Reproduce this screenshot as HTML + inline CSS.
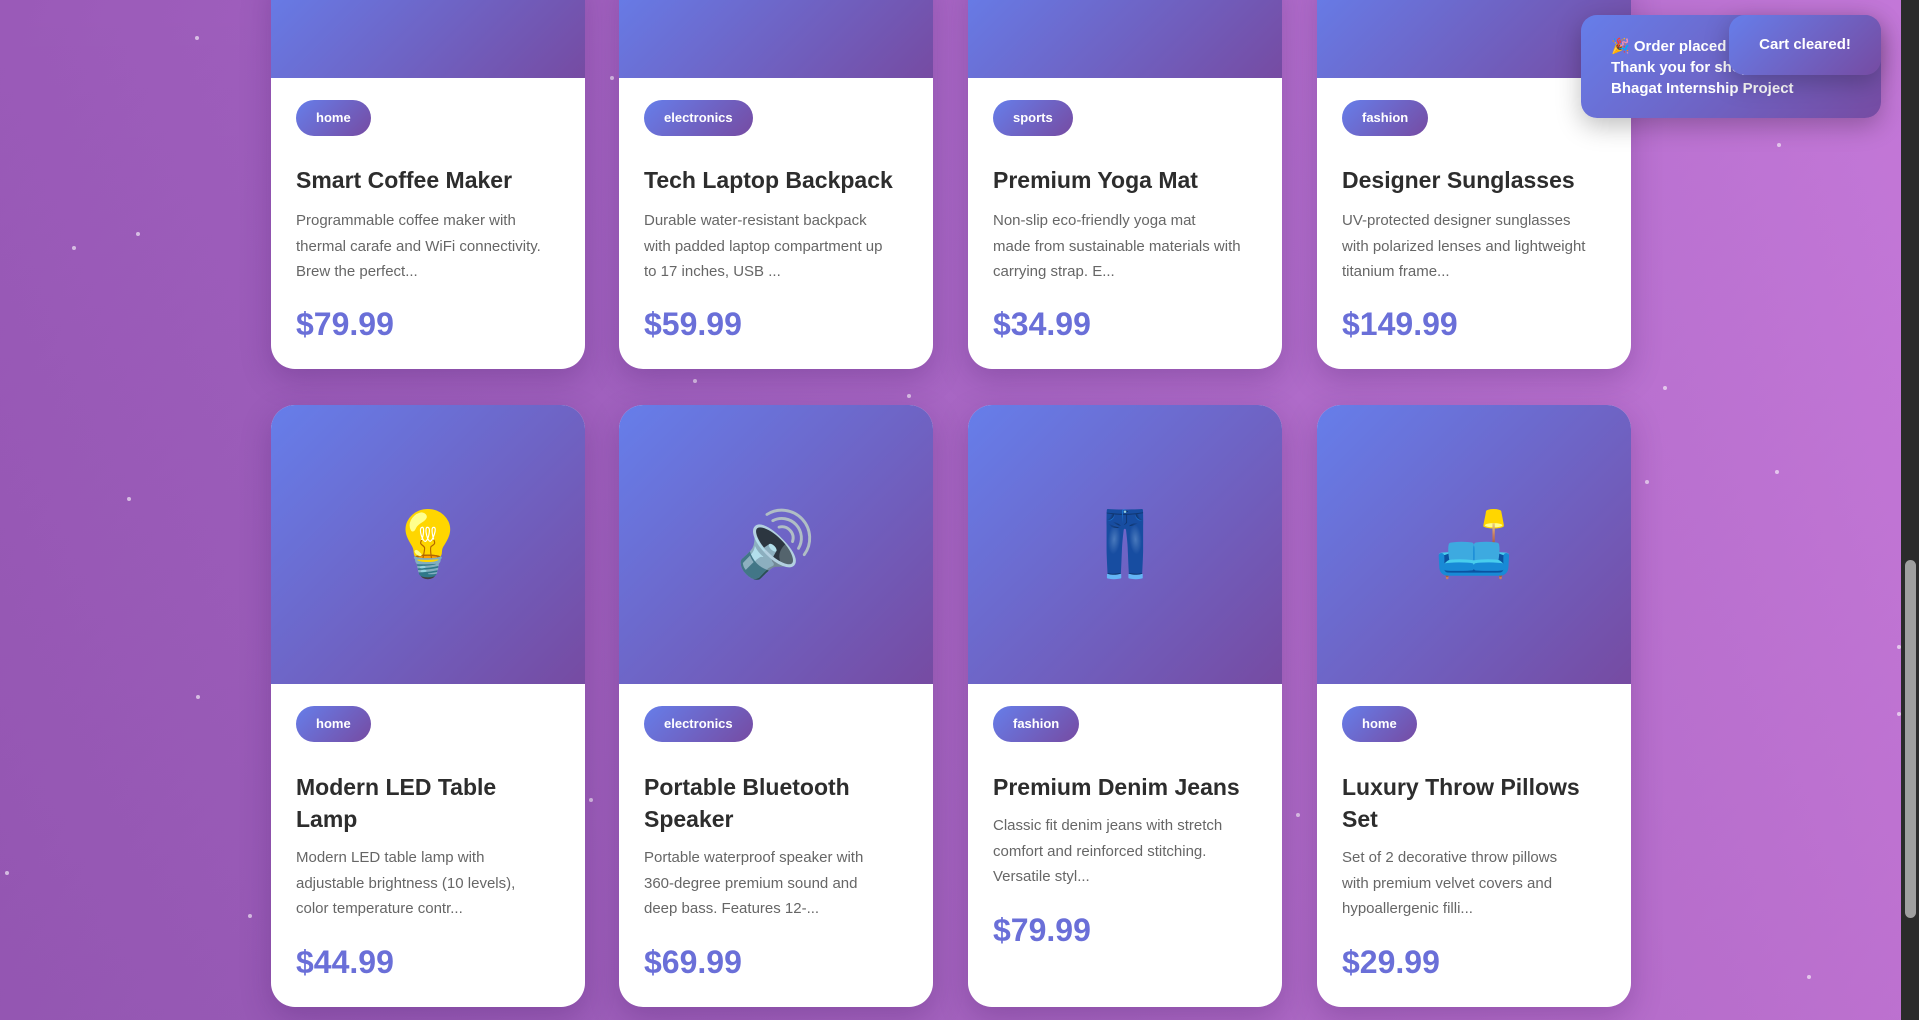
<!DOCTYPE html>
<html><head><meta charset="utf-8"><style>
*{margin:0;padding:0;box-sizing:border-box}
html,body{width:1919px;height:1020px;overflow:hidden}
body{position:relative;font-family:"Liberation Sans","DejaVu Sans",sans-serif;
background:linear-gradient(110deg,#9a5ab8 0%,#a665c4 35%,#b670cf 65%,#cf7ee0 100%);}
.bg2{position:absolute;inset:0;background:linear-gradient(180deg,rgba(0,0,0,0) 0%,rgba(60,20,90,0.12) 100%)}
.card{position:absolute;width:314px;background:#fff;border-radius:24px;overflow:hidden;box-shadow:0 10px 30px rgba(60,20,90,0.25)}
.img{position:absolute;left:0;top:0;width:100%;background:linear-gradient(135deg,#667eea 0%,#764ba2 100%);display:flex;align-items:center;justify-content:center;font-size:64px;font-family:"Noto Color Emoji","DejaVu Sans",sans-serif}
.tag{position:absolute;left:25px;height:36px;padding:0 20px;border-radius:18px;background:linear-gradient(135deg,#667eea,#764ba2);color:#fff;font-weight:bold;font-size:13px;line-height:36px}
.t{position:absolute;left:25px;right:20px;font-weight:bold;font-size:23px;line-height:32px;color:#2d2d2d}
.d{position:absolute;left:25px;font-size:15px;line-height:25.5px;color:#666;white-space:nowrap}
.p{position:absolute;left:25px;font-weight:bold;font-size:32px;color:#6a6fd8;line-height:40px}
.dot{position:absolute;width:4px;height:4px;border-radius:50%;background:rgba(255,255,255,0.6)}
.toast{position:absolute;border-radius:16px;background:linear-gradient(135deg,#667eea,#764ba2);color:#fff;font-weight:bold;font-size:15px;box-shadow:0 8px 25px rgba(0,0,0,0.25)}
.sb{position:absolute;left:1901px;top:0;width:18px;height:1020px;background:#2b2b2b}
.th{position:absolute;left:1905px;top:560px;width:11px;height:358px;border-radius:6px;background:#9f9f9f}
</style></head><body>
<div class="bg2"></div>
<div class="dot" style="left:195px;top:36px"></div>
<div class="dot" style="left:136px;top:232px"></div>
<div class="dot" style="left:72px;top:246px"></div>
<div class="dot" style="left:127px;top:497px"></div>
<div class="dot" style="left:196px;top:695px"></div>
<div class="dot" style="left:5px;top:871px"></div>
<div class="dot" style="left:248px;top:914px"></div>
<div class="dot" style="left:610px;top:76px"></div>
<div class="dot" style="left:693px;top:379px"></div>
<div class="dot" style="left:907px;top:394px"></div>
<div class="dot" style="left:589px;top:798px"></div>
<div class="dot" style="left:1296px;top:813px"></div>
<div class="dot" style="left:1663px;top:386px"></div>
<div class="dot" style="left:1775px;top:470px"></div>
<div class="dot" style="left:1645px;top:480px"></div>
<div class="dot" style="left:1777px;top:143px"></div>
<div class="dot" style="left:1807px;top:975px"></div>
<div class="dot" style="left:1897px;top:645px"></div>
<div class="dot" style="left:1897px;top:712px"></div>

<div class="card" style="left:271px;top:-30px;height:399px">
<div class="img" style="height:108px"></div>
<div class="tag" style="top:130px">home</div>
<div class="t" style="top:194px">Smart Coffee Maker</div>
<div class="d" style="top:238px">Programmable coffee maker with<br>thermal carafe and WiFi connectivity.<br>Brew the perfect...</div>
<div class="p" style="top:334px">$79.99</div>
</div>
<div class="card" style="left:619px;top:-30px;height:399px">
<div class="img" style="height:108px"></div>
<div class="tag" style="top:130px">electronics</div>
<div class="t" style="top:194px">Tech Laptop Backpack</div>
<div class="d" style="top:238px">Durable water-resistant backpack<br>with padded laptop compartment up<br>to 17 inches, USB ...</div>
<div class="p" style="top:334px">$59.99</div>
</div>
<div class="card" style="left:968px;top:-30px;height:399px">
<div class="img" style="height:108px"></div>
<div class="tag" style="top:130px">sports</div>
<div class="t" style="top:194px">Premium Yoga Mat</div>
<div class="d" style="top:238px">Non-slip eco-friendly yoga mat<br>made from sustainable materials with<br>carrying strap. E...</div>
<div class="p" style="top:334px">$34.99</div>
</div>
<div class="card" style="left:1317px;top:-30px;height:399px">
<div class="img" style="height:108px"></div>
<div class="tag" style="top:130px">fashion</div>
<div class="t" style="top:194px">Designer Sunglasses</div>
<div class="d" style="top:238px">UV-protected designer sunglasses<br>with polarized lenses and lightweight<br>titanium frame...</div>
<div class="p" style="top:334px">$149.99</div>
</div>

<div class="card" style="left:271px;top:405px;height:602px">
<div class="img" style="height:279px">💡</div>
<div class="tag" style="top:301px">home</div>
<div class="t" style="top:366px">Modern LED Table<br>Lamp</div>
<div class="d" style="top:440px">Modern LED table lamp with<br>adjustable brightness (10 levels),<br>color temperature contr...</div>
<div class="p" style="top:537px">$44.99</div>
</div>
<div class="card" style="left:619px;top:405px;height:602px">
<div class="img" style="height:279px">🔊</div>
<div class="tag" style="top:301px">electronics</div>
<div class="t" style="top:366px">Portable Bluetooth<br>Speaker</div>
<div class="d" style="top:440px">Portable waterproof speaker with<br>360-degree premium sound and<br>deep bass. Features 12-...</div>
<div class="p" style="top:537px">$69.99</div>
</div>
<div class="card" style="left:968px;top:405px;height:602px">
<div class="img" style="height:279px">👖</div>
<div class="tag" style="top:301px">fashion</div>
<div class="t" style="top:366px">Premium Denim Jeans</div>
<div class="d" style="top:408px">Classic fit denim jeans with stretch<br>comfort and reinforced stitching.<br>Versatile styl...</div>
<div class="p" style="top:505px">$79.99</div>
</div>
<div class="card" style="left:1317px;top:405px;height:602px">
<div class="img" style="height:279px">🛋️</div>
<div class="tag" style="top:301px">home</div>
<div class="t" style="top:366px">Luxury Throw Pillows<br>Set</div>
<div class="d" style="top:440px">Set of 2 decorative throw pillows<br>with premium velvet covers and<br>hypoallergenic filli...</div>
<div class="p" style="top:537px">$29.99</div>
</div>

<div class="toast" style="left:1581px;top:15px;width:300px;height:103px;padding:21px 0 0 30px;line-height:21px">🎉 Order placed successfully!<br>Thank you for shopping with us -<br>Bhagat Internship Project</div>
<div class="toast" style="left:1729px;top:15px;width:152px;height:60px;line-height:60px;text-align:center">Cart cleared!</div>

<div class="sb"></div>
<div class="th"></div>
</body></html>
